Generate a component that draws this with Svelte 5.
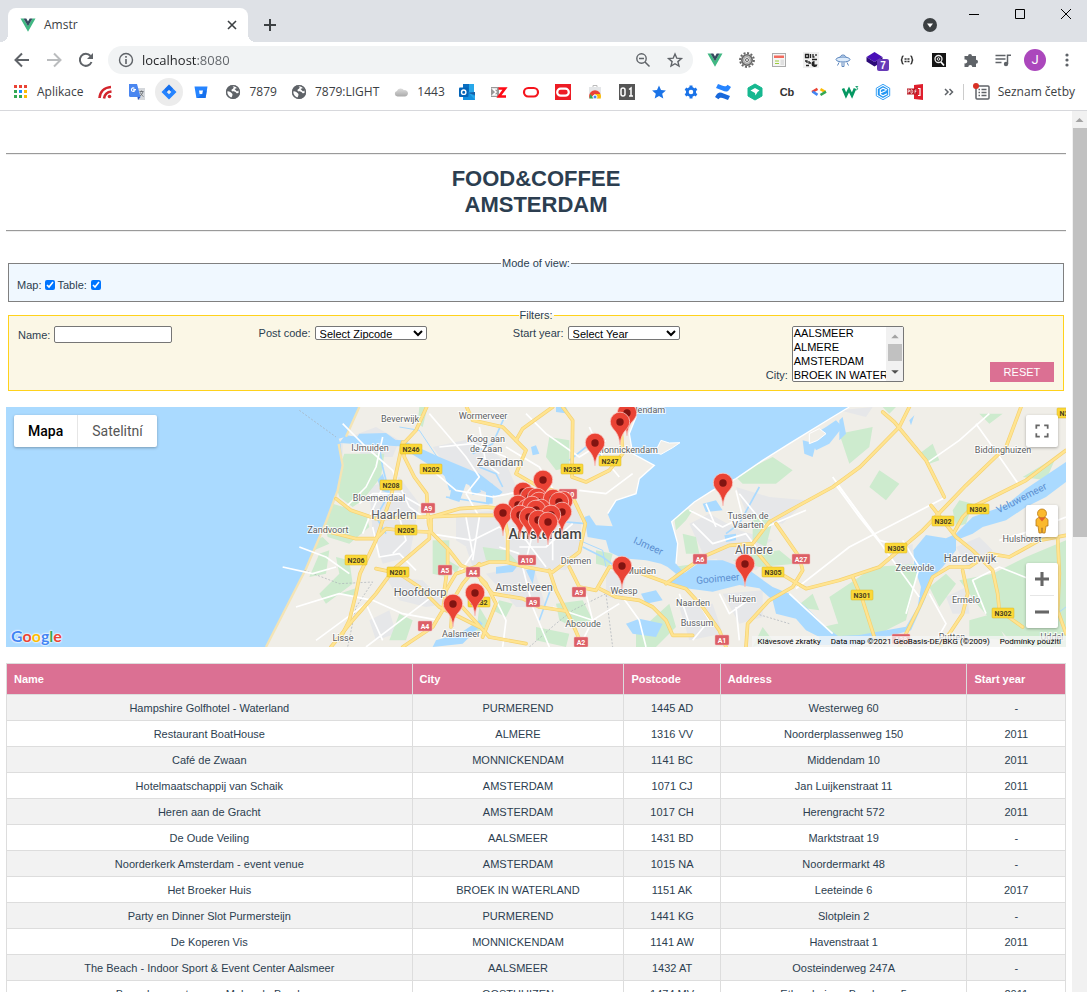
<script>
  const bookmarks = [
    { icon: 'apps', label: 'Aplikace' },
    { icon: 'feed' },
    { icon: 'translate' },
    { icon: 'jira', active: true },
    { icon: 'bucket' },
    { icon: 'globe', label: '7879' },
    { icon: 'globe', label: '7879:LIGHT' },
    { icon: 'cloud', label: '1443' },
    { icon: 'outlook' },
    { icon: 'ez' },
    { icon: 'oval' },
    { icon: 'ovalbox' },
    { icon: 'store' },
    { icon: 'zeroone' },
    { icon: 'bluestar' },
    { icon: 'bluegear' },
    { icon: 'confluence' },
    { icon: 'hexgreen' },
    { icon: 'cb' },
    { icon: 'devs' },
    { icon: 'w3' },
    { icon: 'hexblue' },
    { icon: 'pdf' }
  ];
  const extensions = ['vue', 'gear', 'page', 'qr', 'ufo', 'layers', 'braces', 'lens', 'puzzle', 'queue'];

  let showMap = $state(true);
  let showTable = $state(true);
  let name = $state('');
  let address = $state('localhost:8080');

  const cities = ['AALSMEER', 'ALMERE', 'AMSTERDAM', 'BROEK IN WATERLAND', 'MONNICKENDAM', 'OOSTHUIZEN', 'PURMEREND'];

  const rows = [
    ['Hampshire Golfhotel - Waterland', 'PURMEREND', '1445 AD', 'Westerweg 60', '-'],
    ['Restaurant BoatHouse', 'ALMERE', '1316 VV', 'Noorderplassenweg 150', '2011'],
    ['Café de Zwaan', 'MONNICKENDAM', '1141 BC', 'Middendam 10', '2011'],
    ['Hotelmaatschappij van Schaik', 'AMSTERDAM', '1071 CJ', 'Jan Luijkenstraat 11', '2011'],
    ['Heren aan de Gracht', 'AMSTERDAM', '1017 CH', 'Herengracht 572', '2011'],
    ['De Oude Veiling', 'AALSMEER', '1431 BD', 'Marktstraat 19', '-'],
    ['Noorderkerk Amsterdam - event venue', 'AMSTERDAM', '1015 NA', 'Noordermarkt 48', '-'],
    ['Het Broeker Huis', 'BROEK IN WATERLAND', '1151 AK', 'Leeteinde 6', '2017'],
    ['Party en Dinner Slot Purmersteijn', 'PURMEREND', '1441 KG', 'Slotplein 2', '-'],
    ['De Koperen Vis', 'MONNICKENDAM', '1141 AW', 'Havenstraat 1', '2011'],
    ['The Beach - Indoor Sport & Event Center Aalsmeer', 'AALSMEER', '1432 AT', 'Oosteinderweg 247A', '-'],
    ['Bezoekerscentrum en Molen de Broek', 'OOSTHUIZEN', '1474 MV', 'Ethersheimer Braakweg 5', '2011']
  ];

  // Places: text, centre x, baseline y, size class
  const places = [
    ['Beverwijk', 394, 15, 's'], ['Wormerveer', 477, 12, 's'], ['IJmuiden', 364, 44, 's'],
    ['Koog aan', 480, 35, 's'], ['de Zaan', 480, 45, 's'], ['Zaandam', 494, 59, 'm'],
    ['Bloemendaal', 373, 94, 's'], ['Haarlem', 388, 112, 'l'], ['Zandvoort', 322, 126, 's'],
    ['Hoofddorp', 414, 189, 'm'], ['Aalsmeer', 455, 230, 's'], ['Lisse', 337, 234, 's'],
    ['Diemen', 570, 157, 's'], ['Amstelveen', 518, 184, 'm'], ['Muiden', 635, 167, 's'],
    ['Weesp', 618, 187, 's'], ['Abcoude', 577, 220, 's'], ['Naarden', 687, 199, 's'],
    ['Bussum', 691, 219, 's'], ['Huizen', 736, 195, 's'], ['Almere', 748, 147, 'l'],
    ['Tussen de', 742, 112, 's'], ['Vaarten', 742, 121, 's'], ['Volendam', 639, 6, 's'],
    ['Monnickendam', 621, 46, 's'], ['Biddinghuizen', 997, 46, 's'], ['Harderwijk', 964, 155, 'm'],
    ['Hulshorst', 1016, 135, 's'], ['Zeewolde', 909, 164, 's'], ['Ermelo', 960, 196, 's'],
    ['Putten', 946, 233, 's'], ['Uddel', 1046, 233, 's']
  ];

  // Road shields: code, centre x, centre y
  const shields = [
    ['N246', 405, 42], ['N202', 425, 62], ['N208', 385, 78], ['A9', 422, 101], ['N205', 400, 123],
    ['N206', 350, 153], ['N201', 392, 165], ['A5', 439, 163], ['A4', 467, 165], ['N232', 473, 195],
    ['A9', 527, 195], ['A4', 419, 219], ['A10', 521, 153], ['A9', 573, 185], ['A2', 575, 235],
    ['N235', 566, 62], ['N247', 604, 54], ['A10', 562, 87], ['A6', 694, 152], ['A27', 795, 152],
    ['N305', 767, 165], ['N301', 856, 188], ['A1', 716, 233], ['N305', 890, 141], ['N302', 937, 114],
    ['N306', 972, 102], ['N302', 997, 206], ['N307', 1062, 6], ['A28', 895, 232]
  ];

  // Pins: position of the dot in the pin's head
  const pins = [
    [621, 6], [614, 15], [589, 36], [537, 73], [717, 76], [517, 85], [524, 90], [531, 91], [533, 95],
    [547, 92], [557, 94], [512, 98], [553, 95], [521, 102], [526, 99], [535, 102], [530, 103],
    [556, 105], [497, 106], [514, 108], [545, 108], [523, 110], [532, 113], [542, 115], [739, 157],
    [616, 159], [469, 186], [447, 197]
  ];

  // Roads in thirds of a pixel over the whole map
  const motorways = [
    'M1262 0L1230 70L1192 110L1195 150L1225 210L1262 260L1268 350L1275 375L1330 430L1365 475L1400 490L1440 530L1470 590L1430 690',
    'M1190 105L1170 200L1155 270L1130 340L1110 400L1062 500L1050 560L1030 640L1000 700',
    'M990 275L1035 310L1110 335L1260 330L1370 325L1500 325',
    'M950 370L1050 395L1110 395L1140 365L1200 372L1270 375L1270 395L1165 485L1110 560L1040 640L975 720',
    'M1325 430L1325 480L1315 550',
    'M1275 375L1275 330L1360 305L1440 300L1490 305L1505 380L1505 465L1450 465L1350 500L1320 550L1310 610L1280 660L1220 700L1190 720',
    'M1500 465L1560 480L1640 495L1720 435L1738 350L1700 270L1660 255L1600 240L1530 200L1560 130L1530 100L1490 60L1400 40L1382 0',
    'M1530 100L1550 65L1640 0',
    'M1670 0L1700 40L1698 210L1740 225L1810 190L1850 140L1845 60',
    'M1630 490L1650 550L1700 650L1730 720',
    'M1425 520L1460 560L1550 575L1600 600L1680 612',
    'M1690 480L1720 540L1770 550L1810 480L1880 490L1990 530L2040 545L2090 600L2140 670L2160 720',
    'M1780 545L1830 570L1900 580L1940 600L1980 640L2000 685L2060 685',
    'M1980 530L2090 450L2170 415L2240 410L2290 345L2370 300L2480 240L2562 180L2680 60L2710 0',
    'M2220 720L2225 650L2290 580L2360 540L2390 490L2380 450L2310 350',
    'M2240 420L2290 480L2400 545L2500 520L2620 480L2750 370L2880 235L3000 120L3030 40L3045 0',
    'M2540 510L2570 580L2605 690',
    'M2630 15L2665 45L2760 160L2815 270',
    'M2775 295L2850 390L2900 430L2960 490L2975 560L2980 610L3050 660',
    'M2845 375L2870 330L2900 300L3060 220L3180 130',
    'M2680 720L2740 600L2780 510L2830 480L2890 480L2950 440L3010 450L3100 400L3180 385',
    'M2870 490L2885 560L2870 620L2830 680L2800 720',
    'M3155 390L3160 500L3155 610L3180 680',
    'M1325 600L1360 590L1450 690L1560 710',
    'M1110 485L1180 500L1240 540L1300 600L1420 660',
    'M1420 470L1370 530L1340 580L1335 660'
  ];
  const streets = [
    'M1010 50L1080 120L1160 190L1210 300L1280 350M1130 90L1110 180L1080 240L1020 300M1270 20L1330 90L1380 150L1420 210L1380 260',
    'M880 420L960 450L1030 500M830 480L920 500L990 480M870 600L1000 560L1100 580L1190 620L1300 640M930 700L1080 590L1130 700M1080 720L1290 560',
    'M1100 360L1120 450L1180 440L1230 490M1270 380L1400 400L1480 360L1560 400L1620 480M1380 330L1400 440L1360 500M1290 200L1350 250L1460 270L1560 250',
    'M1500 120L1600 180L1650 260M1560 20L1620 80L1720 150L1800 100M1750 60L1790 150L1840 210M1720 250L1800 260L1880 200',
    'M1460 560L1500 640L1490 720M1550 480L1580 600L1630 720M1640 600L1760 640L1840 590M1740 560L1760 640L1720 720M1850 570L1900 640L1920 720',
    'M2080 590L2110 640L2060 700M2140 560L2170 620L2240 570M2190 600L2200 700M2020 560L2050 650M2200 260L2280 360L2400 310M2050 310L2150 360L2210 330L2190 250',
    'M2060 350L2120 410L2220 380L2250 420M2100 290L2130 360M2480 210L2740 570M2490 235L2560 330L2640 430M2820 270L2530 420L2370 545',
    'M2500 240L2620 400L2700 420M2690 400L2740 480L2700 620M2910 50L2960 120L3040 235M2760 170L2860 100L2950 20M2350 560L2480 680',
    'M2940 620L2900 520L2980 480L3080 520L3110 600M2770 560L2820 650L2780 720M2980 400L3080 370L3180 330M1380 260L1420 330L1400 460',
    'M1520 330L1580 370L1700 380M1540 420L1620 420L1700 350M1560 460L1580 380L1560 300M1640 460L1640 380L1600 280M1480 420L1540 440',
    'M1060 290L1100 260L1180 260L1250 300M1070 380L1090 330L1130 240M1180 330L1200 400L1160 440M1300 120L1400 110L1500 150M1420 60L1440 170L1480 200'
  ];
</script>

{#snippet icon(kind)}
  <svg class="ico" viewBox="0 0 16 16" aria-hidden="true">
    {#if kind === 'apps'}
      {#each [0, 1, 2] as r}
        {#each [0, 1, 2] as c}
          <rect x={1 + c * 5} y={1 + r * 5} width="3" height="3" fill={[['#ea4335', '#ea4335', '#ea4335'], ['#34a853', '#1a8cff', '#fbbc05'], ['#34a853', '#34a853', '#fbbc05']][r][c]} />
        {/each}
      {/each}
    {:else if kind === 'feed'}
      <g fill="none" stroke="#d3242b" stroke-width="2.6"><path d="M2.5 14C3 8 7 3.500 14 3" /><path d="M7 14.500C7.500 11 10 8 14.500 7.500" /></g>
      <circle cx="12.500" cy="12.500" r="1.800" fill="#d3242b" />
    {:else if kind === 'translate'}
      <path d="M7 4h9v12H9z" fill="#d5d8dc" /><path d="M0 0h8l3.500 13H1.500A1.500 1.500 0 0 1 0 11.500z" fill="#4a86f0" /><path d="M8.500 13h3L9 16z" fill="#2a56c6" />
      <path d="M7 5.500H4.800V6.700H5.700A1.800 1.800 0 1 1 5.400 4.300" fill="none" stroke="#fff" stroke-width="1.100" /><path d="M10.500 7.500h4M12.500 6.500v1.200M14 7.500c-.5 2-1.500 3.500-3 4.500M11.500 8.500c.5 2 1.500 3 3 4" fill="none" stroke="#6b7075" stroke-width=".9" />
    {:else if kind === 'jira'}
      <path d="M8 .5L15.500 8 8 15.500.5 8zM8 5.700L5.700 8 8 10.300 10.300 8z" fill="#2684ff" fill-rule="evenodd" /><path d="M8 .5L12 4.500 9.500 7 8 5.700 5.700 8 3.500 5.200z" fill="#0b5fdc" opacity=".55" />
    {:else if kind === 'bucket'}
      <path d="M1.500 2.500h13L12.600 14H3.400zM6 6.500L6.600 10h2.800L10 6.500z" fill="#2684ff" fill-rule="evenodd" /><path d="M10 6.500h3.900L12.600 14H4l5.400-4z" fill="#0b62df" opacity=".6" />
    {:else if kind === 'globe'}
      <circle cx="8" cy="8" r="7" fill="#5f6368" /><path d="M2 7.500c2-.5 3 .5 4.500 1.500s1 2 .5 3.500L6 14.500C3 13.500 1.500 11 2 7.500zM6 1.800c2 .2 3 1 2.500 2.200S6 5 6.500 6.500 10 7 11 8.500s2 .5 3 .2C14 5 11.500 2 8 1.500z" fill="#fff" /><path d="M9.500 5L12 4l2 2-2 1.500z" fill="#5f6368" /><circle cx="8" cy="8" r="6.400" fill="none" stroke="#5f6368" stroke-width="1.400" />
    {:else if kind === 'cloud'}
      <defs><linearGradient id="cloud" x2="0" y2="1"><stop stop-color="#ddd" /><stop offset="1" stop-color="#aaa" /></linearGradient></defs>
      <path d="M4.500 12.500a2.800 2.800 0 0 1-.6-5.500A4 4 0 0 1 11 6.200a3.200 3.200 0 1 1 .6 6.300z" fill="url(#cloud)" />
    {:else if kind === 'outlook'}
      <path d="M4 0h11v9H4z" fill="#28a8ea" /><path d="M4 0h6v8H4z" fill="#0a6ec0" /><path d="M4 8h12v8H4z" fill="#1490df" /><path d="M9 8l7 4.500V16z" fill="#28a8ea" /><path d="M9 9l7-1v3z" fill="#1a5fa3" /><rect y="3.500" width="9.500" height="9.500" rx="1" fill="#0364b8" /><circle cx="4.700" cy="8.200" r="2.200" fill="none" stroke="#fff" stroke-width="1.400" />
    {:else if kind === 'ez'}
      <rect y="3" width="8" height="10" fill="#999" /><path d="M6 5H2l3 3-3 3h4" fill="none" stroke="#fff" stroke-width="1.500" /><path d="M7.500 4.500h6.500L8 12.500h7" fill="none" stroke="#ff0a14" stroke-width="2.600" />
    {:else if kind === 'oval'}
      <rect x="1" y="4" width="14" height="8.500" rx="4.250" fill="none" stroke="#f5131c" stroke-width="2.200" />
    {:else if kind === 'ovalbox'}
      <path d="M0 0h16v16H0z" fill="#ed1c24" /><rect x="2.200" y="4.700" width="11.600" height="7" rx="3.500" fill="none" stroke="#fff" stroke-width="2.200" />
    {:else if kind === 'store'}
      <path d="M2 3h12v11.500H2z" fill="#e4e6e8" /><path d="M6 3V1.500h4V3" fill="none" stroke="#bbb" /><path d="M2.500 14.500A5.700 5.700 0 0 1 13.500 10H8z" fill="#ea4335" /><path d="M13.500 10a5.700 5.700 0 0 1 .2 4.500H9L8 10z" fill="#fbbc05" /><path d="M3.300 10L7 14.500H2.500z" fill="#34a853" /><circle cx="8" cy="13" r="2" fill="#4285f4" stroke="#fff" />
    {:else if kind === 'zeroone'}
      <path d="M0 0h16v16H0z" fill="#555" /><rect x="2" y="4" width="4" height="8" rx="2" fill="none" stroke="#fff" stroke-width="1.500" /><path d="M10 5.500L12 4v8M10 12h4" fill="none" stroke="#fff" stroke-width="1.500" />
    {:else if kind === 'bluestar'}
      <path d="M8 1.500l2 4.500 4.900.5-3.700 3.200 1.100 4.800L8 12l-4.300 2.500 1.100-4.800L1.100 6.500 6 6z" fill="#1a73e8" />
    {:else if kind === 'bluegear'}
      <circle cx="8" cy="8" r="3.700" fill="none" stroke="#1a73e8" stroke-width="2.800" /><path d="M8 1.500v2.500M8 12v2.500M2.400 4.800l2 1.200M11.600 10l2 1.200M2.400 11.200l2-1.200M11.600 6l2-1.200" stroke="#1a73e8" stroke-width="3" />
    {:else if kind === 'confluence'}
      <path d="M1 11.500c2.500-4.500 5-3 7.500-2L15 12l-2 4c-4.500-1.500-7.500-4-9.500-.8L0 13z" fill="#1868db" /><path d="M15 4.500c-2.500 4.500-5 3-7.500 2L1 4l2-4c4.500 1.500 7.500 4 9.500.8L16 3z" fill="#2684ff" />
    {:else if kind === 'hexgreen'}
      <path d="M8 0l7 4v8l-7 4-7-4V4z" fill="#17b890" stroke="#17b890" stroke-linejoin="round" /><path d="M3.500 6.500L8 4l4.500 2.500L10.500 8l-2 3.500L8 9z" fill="#fff" />
    {:else if kind === 'cb'}
      <text x="8" y="12" text-anchor="middle" class="glyph">Cb</text>
    {:else if kind === 'devs'}
      <g fill="none" stroke-width="2.600"><path d="M1 8l5.500-3.200" stroke="#ea4335" /><path d="M1.500 7.500L6.500 10.800" stroke="#4285f4" /><path d="M9.500 5.200l5 2.900" stroke="#fbbc05" /><path d="M15 7.700l-5.500 3.300" stroke="#34a853" /></g>
    {:else if kind === 'w3'}
      <path d="M0 4.500l3 7 3-6 3 6 3-7" fill="none" stroke="#059862" stroke-width="2.700" /><path d="M12.500 2.500h2.300l-1.200 1.400c1.800.2 1.400 2.300-1.100 1.900" fill="none" stroke="#059862" stroke-width=".9" />
    {:else if kind === 'hexblue'}
      <path d="M8 .3l6.700 3.900v7.600L8 15.700l-6.700-3.900V4.200z" fill="none" stroke="#2296f3" stroke-width=".9" /><path d="M8 2l5.200 3v6L8 14l-5.200-3V5z" fill="#2296f3" /><path d="M12 6L8 4.200 5.300 5.800v4.400L8 11.800l4-2M5.500 9l5.500-2.500" fill="none" stroke="#fff" stroke-width="1.200" />
    {:else if kind === 'pdf'}
      <path d="M7 1l9-1v16l-9-1z" fill="#df1f2d" /><path d="M0 4.500h10v6H0z" fill="#b9141f" /><path d="M1 5.500v4M1 6h1.500v1.600H1M4 5.800v3.500h1c1 0 1-3.500 0-3.500zM8 9.500V6h1.500M8 7.500h1.300" fill="none" stroke="#fff" stroke-width=".7" /><path d="M11 4.500h2v7h-2" fill="none" stroke="#fff" stroke-width="1.200" />
    {:else if kind === 'vue'}
      <path d="M.5 1.500h3L8 9l4.500-7.500h3L8 14.800z" fill="#41b883" /><path d="M3.500 1.500h2.800L8 4.500l1.700-3h2.800L8 9.300z" fill="#34495e" />
    {:else if kind === 'gear'}
      <circle cx="8" cy="8" r="6.900" fill="none" stroke="#666" stroke-width="2" stroke-dasharray="2 1.600" /><circle cx="8" cy="8" r="5.200" fill="#ccc" stroke="#666" stroke-width="1.600" /><circle cx="8" cy="8" r="3.400" fill="#e8e8e8" stroke="#999" /><circle cx="8" cy="8" r="1.500" fill="#f8f8f8" stroke="#444" stroke-width=".8" />
    {:else if kind === 'page'}
      <rect x="1.500" y="1.500" width="13" height="13" fill="#f5f5f5" stroke="#aaa" /><path d="M3 3.500h10v2.500H3z" fill="#f26b5e" /><path d="M4 9h4M4 11.500h4" stroke="#9ccc3c" stroke-width="1.200" /><path d="M9.500 7.500H13V13H9.500z" fill="#e0e0e0" />
    {:else if kind === 'qr'}
      <path d="M0 0h16v16H0z" fill="#f0f0f0" /><g fill="none" stroke="#222" stroke-width="1.300"><path d="M2.500 2.500h3v3h-3zM10 2v3h1.500M13 2v2M7.500 2v4M2 9h2v2M6 9v2h2M3 13.500h3M9 7.500h5" /></g><path d="M11.500 9a3 3 0 1 0 3 3.500h-3z" fill="#222" />
    {:else if kind === 'ufo'}
      <g fill="#dcebfb" stroke="#5c86bd" stroke-width="1"><path d="M5 6c0-4 6-4 6 0" /><ellipse cx="8" cy="7.500" rx="7" ry="2.500" /><path d="M4 10.500l-1.500 3M12 10.500l1.500 3M7 10.500v4h2v-4" fill="none" /></g>
    {:else if kind === 'layers'}
      <path d="M7.500 0L15.500 5 7.500 10-.5 5z" fill="#4a10b8" /><path d="M-.5 5l8 5 8-5v4.500l-8 5-8-5z" fill="#2c0a78" /><rect x="10" y="7" width="12" height="12" rx="2" fill="#673ab7" /><text x="16" y="17" text-anchor="middle" class="badge">7</text>
    {:else if kind === 'braces'}
      <g fill="none" stroke="#333" stroke-width="1.500"><path d="M4.500 4C2 4 4 7.500 2 8c2 .5 0 4 2.500 4M11.500 4c2.500 0 .5 3.500 2.500 4-2 .5 0 4-2.500 4" /><path d="M5.500 7h5M5.500 9.500h5" stroke-dasharray="2.100 .8" /></g>
    {:else if kind === 'lens'}
      <path d="M1 1h14v14H1z" fill="#151515" /><circle cx="7.500" cy="7" r="3.500" fill="none" stroke="#eee" stroke-width="1.300" /><circle cx="7.500" cy="7" r="1.300" fill="none" stroke="#eee" /><path d="M10 10l3 3.500" stroke="#fff" stroke-width="1.700" />
    {:else if kind === 'puzzle'}
      <path d="M1.500 4H5a2 2 0 1 1 4 0h4v3.700a2 2 0 1 1 0 4v3.300H9.300a2 2 0 1 0-4 0H1.500v-3.700a2 2 0 1 0 0-3.700z" fill="#5f6368" />
    {:else if kind === 'queue'}
      <path d="M.5 3.500h10M.5 7h10M.5 10.500h6" stroke="#5f6368" stroke-width="1.500" /><path d="M12.500 12V3.300H16" fill="none" stroke="#5f6368" stroke-width="1.500" /><circle cx="11" cy="12" r="2.200" fill="#5f6368" />
    {/if}
  </svg>
{/snippet}

<div class="window">
  <header class="chrome">
    <div class="tabs">
      <div class="tab">
        {@render icon('vue')}
        <span class="tab-title">Amstr</span>
        <button class="plain small" aria-label="Close tab"><svg viewBox="0 0 16 16"><path d="M4 4l8 8M12 4l-8 8" stroke="#3c4043" stroke-width="1.600" /></svg></button>
      </div>
      <button class="plain small newtab" aria-label="New tab"><svg viewBox="0 0 16 16"><path d="M8 2v12M2 8h12" stroke="#3c4043" stroke-width="2" /></svg></button>
      <button class="plain small tabsearch" aria-label="Search tabs"><svg viewBox="0 0 16 16"><circle cx="8" cy="8" r="7" fill="#3c4043" /><path d="M5 6.500h6L8 10.500z" fill="#fff" /></svg></button>
      <div class="winbuttons">
        <button class="plain" aria-label="Minimize"><svg viewBox="0 0 12 12"><path d="M1 6.500h10" stroke="#000" /></svg></button>
        <button class="plain" aria-label="Maximize"><svg viewBox="0 0 12 12"><path d="M1.500 1.500h9v9h-9z" fill="none" stroke="#000" /></svg></button>
        <button class="plain" aria-label="Close"><svg viewBox="0 0 12 12"><path d="M1 1l10 10M11 1L1 11" stroke="#000" /></svg></button>
      </div>
    </div>

    <div class="toolbar">
      <button class="plain tool" aria-label="Back"><svg viewBox="0 0 16 16"><path d="M15 8H2M8 1.500L1.500 8 8 14.500" fill="none" stroke="#5f6368" stroke-width="2" /></svg></button>
      <button class="plain tool" aria-label="Forward"><svg viewBox="0 0 16 16"><path d="M1 8h13M8 1.500L14.500 8 8 14.500" fill="none" stroke="#babcbe" stroke-width="2" /></svg></button>
      <button class="plain tool" aria-label="Reload"><svg viewBox="0 0 16 16"><path d="M13.500 10A6 6 0 1 1 12.500 4" fill="none" stroke="#5f6368" stroke-width="2" /><path d="M15 1v6H9z" fill="#5f6368" /></svg></button>
      <div class="omnibox">
        <svg class="ico" viewBox="0 0 16 16" aria-hidden="true"><circle cx="8" cy="8" r="6.500" fill="none" stroke="#5f6368" stroke-width="1.400" /><path d="M8 7v5M8 4v1.700" stroke="#5f6368" stroke-width="1.600" /></svg>
        <input type="text" aria-label="Address" bind:value={address} />
        <button class="plain tool" aria-label="Zoom"><svg viewBox="0 0 16 16"><circle cx="6.500" cy="6.500" r="4.700" fill="none" stroke="#5f6368" stroke-width="1.400" /><path d="M10 10l4.500 4.500M4 6.500h5" stroke="#5f6368" stroke-width="1.500" /></svg></button>
        <button class="plain tool" aria-label="Bookmark"><svg viewBox="0 0 16 16"><path d="M8 2l1.800 4.200 4.600.4-3.500 3 1.100 4.500L8 11.700l-4 2.400 1.100-4.500-3.500-3 4.600-.4z" fill="none" stroke="#5f6368" stroke-width="1.400" /></svg></button>
      </div>
      {#each extensions as e}
        <button class="plain tool" aria-label={e}>{@render icon(e)}</button>
      {/each}
      <button class="avatar" aria-label="Profile">J</button>
      <button class="plain tool" aria-label="Menu"><svg viewBox="0 0 16 16"><g fill="#5f6368"><circle cx="8" cy="3" r="1.600" /><circle cx="8" cy="8" r="1.600" /><circle cx="8" cy="13" r="1.600" /></g></svg></button>
    </div>

    <nav class="bookmarks" aria-label="Bookmarks">
      {#each bookmarks as b}
        <a href="#bookmark" class:active={b.active} class:labelled={b.label} aria-label={b.label ?? b.icon}>
          {@render icon(b.icon)}
          {#if b.label}<span>{b.label}</span>{/if}
        </a>
      {/each}
      <button class="plain more" aria-label="More bookmarks"><svg viewBox="0 0 16 16"><path d="M4 5l3 3-3 3M8.500 5l3 3-3 3" fill="none" stroke="#5f6368" stroke-width="1.500" /></svg></button>
      <a href="#reading" class="reading">
        <svg class="ico" viewBox="0 0 16 16" aria-hidden="true"><rect x="2" y="2" width="13" height="13" rx="1" fill="none" stroke="#5f6368" stroke-width="1.500" /><path d="M4.500 5.500h1.500M4.500 8.500h1.500M4.500 11.500h1.500M7.500 5.500h5M7.500 8.500h5M7.500 11.500h5" stroke="#5f6368" stroke-width="1.500" /><circle cx="2" cy="2" r="3" fill="#d93025" /></svg>
        <span>Seznam četby</span>
      </a>
    </nav>
  </header>

  <div class="viewport">
    <main>
      <hr />
      <h1>FOOD&amp;COFFEE<br />AMSTERDAM</h1>
      <hr />

      <fieldset class="mode">
        <legend>Mode of view:</legend>
        <label for="map-on">Map:</label><input id="map-on" type="checkbox" bind:checked={showMap} />
        <label for="table-on">Table:</label><input id="table-on" type="checkbox" bind:checked={showTable} />
      </fieldset>

      <fieldset class="filters">
        <legend>Filters:</legend>
        <div class="filter-row">
          <div class="field"><label for="name">Name:</label><input id="name" type="text" bind:value={name} /></div>
          <div class="field"><label for="zip">Post code:</label><select id="zip"><option>Select Zipcode</option></select></div>
          <div class="field"><label for="year">Start year:</label><select id="year"><option>Select Year</option></select></div>
          <div class="field end">
            <label for="city">City:</label>
            <div class="listbox">
              <select id="city" multiple size="4">
                {#each cities as c}<option>{c}</option>{/each}
              </select>
              <div class="bar" aria-hidden="true">
                <svg viewBox="0 0 15 14"><path d="M3.500 9.500h8l-4-4z" fill="#a3a3a3" /></svg>
                <i></i>
                <svg viewBox="0 0 15 14"><path d="M3.500 5h8l-4 4z" fill="#505050" /></svg>
              </div>
            </div>
          </div>
          <button class="reset" type="button">RESET</button>
        </div>
      </fieldset>

      {#if showMap}
        <section class="map" aria-label="Map">
          <svg class="canvas" viewBox="0 0 1060 240" preserveAspectRatio="xMidYMid slice">
            <rect width="1060" height="240" fill="#f0eee8" />
            <g transform="scale(.33333)">
              <g fill="#e6e7e9">
                <path d="M1030 90L1110 60L1180 100L1160 150L1070 150ZM1090 240L1180 210L1240 290L1210 450L1130 470L1100 380ZM1280 120L1420 90L1500 170L1540 260L1420 260L1330 190Z" />
                <path d="M1350 320L1480 310L1500 420L1430 450L1350 400ZM1500 310L1720 290L1730 430L1680 490L1560 480L1500 440ZM1380 420L1460 400L1470 460L1400 480Z" />
                <path d="M1440 500L1580 470L1620 600L1530 600ZM1140 510L1250 520L1320 590L1260 600L1180 580ZM1090 640L1150 610L1170 680L1110 700Z" />
                <path d="M2050 350L2110 320L2200 370L2300 400L2230 440L2100 460ZM2190 240L2290 270L2400 280L2330 350L2230 340ZM2120 430L2290 450L2250 490L2140 470Z" />
                <path d="M2020 600L2120 590L2150 680L2050 700ZM2150 560L2270 550L2270 630L2200 650ZM1800 490L1860 500L1850 580L1800 570ZM2850 420L2920 390L2960 430L2890 490Z" />
                <path d="M2650 440L2720 410L2720 470L2670 480ZM2820 570L2880 540L2890 620L2840 620ZM2500 10L2600 0L2580 30ZM900 110L1010 105L1010 150L940 170Z" />
              </g>
              <g fill="#cdebce">
                <path d="M1015 140L1135 140L1125 210L1070 280L1040 300L1000 270L985 220ZM980 290L1080 320L1090 360L1030 410L965 390L955 350Z" />
                <path d="M940 440L970 430L960 500L910 510ZM990 450L1030 460L1040 530L960 590L940 560L1000 500ZM1000 560L1060 540L1040 570ZM1280 400L1330 400L1330 440L1320 510L1280 500Z" />
                <path d="M1630 90L1690 100L1690 180L1650 190L1620 150ZM1240 0L1265 0L1250 60L1235 50ZM1310 450L1360 480L1350 500ZM1650 590L1730 580L1760 640L1700 660L1660 640Z" />
                <path d="M1430 420L1500 430L1540 470L1440 460ZM1480 580L1520 590L1500 630L1460 610ZM1590 660L1690 680L1680 720L1590 700ZM1770 430L1820 440L1810 480L1770 470Z" />
                <path d="M2000 300L2060 310L2040 340L2010 370ZM2030 380L2070 390L2080 440L2040 440ZM2180 200L2260 170L2300 150L2360 190L2310 230L2210 230ZM2500 80L2600 60L2590 120L2530 170Z" />
                <path d="M2180 460L2250 440L2320 430L2370 470L2260 480ZM2240 320L2300 340L2280 420L2240 400ZM2370 600L2420 560L2440 610ZM2270 660L2300 700L2240 720ZM1890 680L1990 590L2010 660L1950 720L1890 720Z" />
                <path d="M2470 570L2560 510L2600 480L2740 470L2700 640L2620 680L2500 660ZM2450 660L2540 640L2640 670L2640 700L2480 710ZM2740 140L2780 110L2800 160L2770 170ZM2620 190L2680 230L2640 280L2590 240Z" />
                <path d="M2840 310L2860 280L2900 290L2880 350L2850 360ZM2860 520L2960 500L3060 450L3180 400L3180 720L3030 720L2920 600ZM2770 540L2820 500L2850 530L2800 600ZM2890 640L2960 620L3000 700L2890 690ZM2920 20L2990 20L2950 50ZM3050 210L3150 150L3120 220Z" />
                <path d="M1180 620L1220 640L1200 700L1150 700ZM1420 600L1450 650L1410 680ZM870 420L950 390L970 410L900 440ZM2000 480L2070 470L2030 500ZM2630 0L2670 0L2650 20Z" />
              </g>
              <g fill="#aadaff">
                <path d="M0 0H1060L1020 89L998 95L1004 111L1010 175L995 250L960 345L900 485L780 720H0Z" />
                <path d="M1018 84L1090 95L1190 100L1300 150L1420 200L1490 255L1475 270L1380 230L1360 285L1330 275L1340 225L1280 180L1180 118L1060 112L1000 108Z" />
                <path d="M1380 200L1400 265L1425 255L1410 205ZM1440 230L1440 290L1460 290L1460 230ZM1310 190L1330 250L1345 250L1340 200Z" />
                <path d="M1878 0L1890 30L1870 80L1880 140L1945 175L1900 215L1890 260L1830 280L1805 320L1820 358L1770 355L1750 325L1735 330L1745 390L1800 400L1810 435L1850 454L1920 460L1965 470L1985 480L2010 500L1982 529L2040 544L2120 554L2200 534L2260 544L2300 580L2310 620L2370 635L2400 670L2440 690L2500 690L2460 660L2400 600L2350 560L2300 540L2230 490L2150 460L2090 460L2035 499L2010 470L2015 410L1997 344L2065 285L2120 250L2190 215L2270 160L2350 110L2480 30L2530 0Z" />
                <path d="M2440 690L2560 684L2700 659L2735 600L2745 540L2725 480L2722 430L2760 384L2820 394L2850 380L2900 330L3000 295L3060 245L3180 165V225L3120 270L3060 300L3000 340L2930 360L2900 380L2850 400L2850 430L2810 480L2770 520L2760 570L2715 670L2640 690L2560 714L2440 714Z" />
                <path d="M2410 90L2460 60L2490 40L2510 60L2470 110L2430 130ZM2390 100L2430 110L2420 150L2395 140ZM2090 290L2130 280L2150 310L2100 315ZM2155 385L2190 380L2190 400L2160 405ZM1905 560L1950 550L1970 580L1920 590Z" />
                <path d="M1860 650L1900 635L1970 650L1950 690L1880 680ZM1290 700L1360 680L1420 640L1430 650L1370 710L1280 720ZM1115 220L1125 250L1150 260L1130 200ZM1560 490L1590 480L1580 530ZM2510 30L2520 80L2500 100L2500 40ZM2710 40L2725 25L2715 55Z" />
                <path d="M1575 120L1590 115L1600 140L1580 145ZM1470 480L1540 470L1520 495L1470 500ZM1650 0L1680 0L1690 20L1650 15ZM1060 80L1140 78L1170 100L1050 95Z" />
              </g>
              <g fill="#f0eee8" stroke="#fff" stroke-width="3">
                <path d="M1955 120L1965 100L1990 108L2022 107L2000 122L1965 142L1945 135Z" />
                <path d="M2410 80L2440 65L2460 80L2435 100L2410 110Z" />
              </g>
              <path d="M1060 0L1020 89M998 111L1010 175L995 250L960 345L900 485L780 720" fill="none" stroke="#f4e4b5" stroke-width="7" />
              <path d="M1878 0L1890 30L1870 80L1880 140L1945 175L1900 215L1890 260L1830 280L1805 320M2010 470L2015 410L1997 344L2065 285L2120 250L2190 215L2270 160L2350 110L2480 30L2530 0" fill="none" stroke="#fff" stroke-width="4" />
              <g fill="none" stroke="#aadaff" stroke-width="5">
                <path d="M1730 420L1790 450L1830 480M1550 250L1620 340L1740 350M1420 180L1470 200L1490 240M1500 20L1460 110L1400 140M1690 160L1740 120L1810 160M1120 120L1130 180L1150 260L1110 330L1140 380M1640 530L1600 640M1320 270L1450 290M2160 380L2200 350L2260 240" />
                <path d="M1180 60L1240 70L1300 160M1720 400L1790 430L1800 480M3180 600L3100 660" stroke-width="3" />
              </g>
              <g fill="none" stroke="#a8adb5" stroke-width="2" stroke-dasharray="6 5">
                <path d="M895 490L1000 530L1100 525L1050 600L1025 720M880 10L990 90M1570 720L1650 650L1700 610L1800 560L1820 720M2250 620L2350 650" />
              </g>
              <g fill="none" stroke="#fff" stroke-width="5" stroke-linejoin="round">
                {#each streets as d}<path {d} />{/each}
              </g>
              <g fill="none" stroke="#f5d272" stroke-width="11" stroke-linejoin="round" stroke-linecap="round">
                {#each motorways as d}<path {d} />{/each}
              </g>
              <g fill="none" stroke="#ffe491" stroke-width="7" stroke-linejoin="round" stroke-linecap="round">
                {#each motorways as d}<path {d} />{/each}
              </g>
            </g>
            <g class="places">
              {#each places as [t, x, y, size]}<text {x} {y} class={size}>{t}</text>{/each}
              <text x="539" y="132" class="capital">Amsterdam</text>
              <text class="water" transform="translate(641 142) rotate(24)">IJmeer</text>
              <text class="water" transform="translate(712 175) rotate(-5)">Gooimeer</text>
              <text class="water" transform="translate(1017 94) rotate(-27)">Veluwemeer</text>
            </g>
            {#each shields as [code, x, y]}
              {@const red = code.startsWith('A')}
              {@const w = code.length > 3 ? 22 : code.length > 2 ? 18 : 14}
              <rect x={x - w / 2} y={y - 5} width={w} height="10" rx="1" fill={red ? '#dc5f66' : '#fbd837'} stroke={red ? '#f3b9bb' : '#d9b429'} stroke-width=".5" />
              <text {x} y={y + 3} class="shield" fill={red ? '#fff' : '#4a4222'}>{code}</text>
            {/each}
            {#each pins as [x, y]}
              <g transform="translate({x} {y})">
                <path d="M0 23C-1 13-4 10-7.500 6A9.700 9.700 0 1 1 7.500 6C4 10 1 13 0 23Z" fill="#ea4335" stroke="#f9c6c1" stroke-width=".8" />
                <circle r="3.700" fill="#811411" />
              </g>
            {/each}
          </svg>

          <div class="maptype">
            <button type="button" class="on">Mapa</button>
            <button type="button">Satelitní</button>
          </div>
          <button type="button" class="ctl full" aria-label="Fullscreen"><svg viewBox="0 0 16 16"><path d="M1.500 5.500v-4h4M10.500 1.500h4v4M14.500 10.500v4h-4M5.500 14.500h-4v-4" fill="none" stroke="#666" stroke-width="2" /></svg></button>
          <div class="side">
            <button type="button" class="ctl" aria-label="Street View"><svg class="peg" viewBox="0 0 16 26"><path d="M4.500 9.500h7l2.500 2v6.500h-2l-1 7H8.500v-5h-1v5H5l-1-7H2v-6.500z" fill="#fbb92e" stroke="#b87a16" stroke-width=".8" /><circle cx="8" cy="5.500" r="4.500" fill="#fbb92e" stroke="#b87a16" stroke-width=".8" /><path d="M4.500 9.500h7L8 13.500z" fill="#e2622b" /></svg></button>
            <div class="zoom">
              <button type="button" aria-label="Zoom in"><svg viewBox="0 0 16 16"><path d="M0 8h16M8 0v16" stroke="#666" stroke-width="3.500" /></svg></button>
              <button type="button" aria-label="Zoom out"><svg viewBox="0 0 16 16"><path d="M0 8h16" stroke="#666" stroke-width="3.500" /></svg></button>
            </div>
          </div>
          <div class="google" aria-label="Google"><b class="bl">G</b><b class="rd">o</b><b class="ye">o</b><b class="bl">g</b><b class="gr">l</b><b class="rd">e</b></div>
          <div class="credits">
            <a href="#keys">Klávesové zkratky</a><span>Data map ©2021 GeoBasis-DE/BKG (©2009)</span><a href="#terms">Podmínky použití</a>
          </div>
        </section>
      {/if}

      {#if showTable}
        <table>
          <colgroup><col class="c1" /><col class="c2" /><col class="c3" /><col class="c4" /><col class="c5" /></colgroup>
          <thead>
            <tr><th>Name</th><th>City</th><th>Postcode</th><th>Address</th><th>Start year</th></tr>
          </thead>
          <tbody>
            {#each rows as r}
              <tr>{#each r as cell}<td>{cell}</td>{/each}</tr>
            {/each}
          </tbody>
        </table>
      {/if}
    </main>
    <div class="scrollbar" aria-hidden="true">
      <svg viewBox="0 0 15 17"><path d="M3.500 11h8l-4-4z" fill="#a3a3a3" /></svg>
      <i></i>
    </div>
  </div>
</div>

<style>
  :global(body) { margin: 0; background: #fff; overflow: hidden; }
  * { box-sizing: border-box; }
  .window { height: 100vh; display: flex; flex-direction: column; overflow: hidden; }
  .ico { width: 16px; height: 16px; display: block; flex: none; overflow: visible; }
  .plain { border: 0; background: none; padding: 0; display: flex; align-items: center; justify-content: center; }
  .glyph { font: bold 11px "Liberation Sans", sans-serif; fill: #333; }
  .badge { font: bold 10px "Liberation Sans", sans-serif; fill: #fff; }

  .chrome { flex: none; border-bottom: 1px solid #d7d8dc; font: 12px/16px "Open Sans", sans-serif; color: #3c4043; }
  .tabs { display: flex; align-items: flex-end; height: 42px; padding-left: 8px; background: #dee1e6; overflow: hidden; }
  .tab { position: relative; display: flex; align-items: center; gap: 8px; width: 240px; height: 34px; padding: 0 8px 0 12px; background: #fff; border-radius: 8px 8px 0 0; }
  .tab::before, .tab::after { content: ""; position: absolute; bottom: 0; width: 8px; height: 8px; }
  .tab::before { left: -8px; background: radial-gradient(circle at 0 0, #dee1e6 8px, #fff 8px); }
  .tab::after { right: -8px; background: radial-gradient(circle at 100% 0, #dee1e6 8px, #fff 8px); }
  .tab-title { flex: 1; }
  .small svg { width: 16px; height: 16px; display: block; }
  .small { height: 34px; }
  .newtab { margin-left: 14px; }
  .tabsearch { margin-left: auto; }
  .winbuttons { display: flex; align-self: flex-start; margin: 0 -2px 0 13px; }
  .winbuttons button { width: 46px; height: 28px; }
  .winbuttons svg { width: 12px; height: 12px; }

  .toolbar { display: flex; align-items: center; height: 36px; padding: 0 4px 0 6px; }
  .tool { width: 32px; height: 28px; flex: none; }
  .tool svg { width: 16px; height: 16px; display: block; overflow: visible; }
  .omnibox { flex: 1; display: flex; align-items: center; height: 28px; margin: 0 6px; padding: 0 2px 0 10px; background: #f1f3f4; border-radius: 14px; }
  .omnibox input { flex: 1; min-width: 0; border: 0; outline: 0; padding: 0; margin-left: 8px; font: 13px/20px "Open Sans", sans-serif; color: transparent; background: linear-gradient(90deg, #202124 55px, #5f6368 55px); background-clip: text; -webkit-background-clip: text; }
  .avatar { width: 22px; height: 22px; margin: 0 5px; border: 0; border-radius: 50%; padding: 0; background: #ab47bc; color: #fff; font: 13px/22px Roboto, sans-serif; flex: none; }

  .bookmarks { display: flex; align-items: center; height: 28px; margin-bottom: 4px; padding: 0 4px 0 5px; }
  .bookmarks a { display: flex; align-items: center; gap: 8px; height: 28px; padding: 0 8px; color: #3c4043; text-decoration: none; white-space: nowrap; flex: none; }
  .bookmarks .labelled { padding-right: 6px; }
  .bookmarks .active { position: relative; z-index: 0; }
  .bookmarks .active::before { content: ""; position: absolute; inset: 0 2px; z-index: -1; background: #ececec; border-radius: 50%; }
  .more { width: 16px; margin-left: auto; }
  .more svg { width: 16px; height: 16px; }
  .bookmarks .reading { height: 16px; margin-left: 6px; padding: 0 8px 0 10px; border-left: 1px solid #ccc; }

  .viewport { flex: 1; min-height: 0; display: flex; overflow: hidden; }
  main { flex: 1; min-width: 0; padding: 42px 6px 0; overflow: hidden; font: 11px/14px "Liberation Sans", Arial, sans-serif; color: #2c3e50; text-align: center; }
  hr { height: 2px; margin: 0; border: 0; border-top: 1px solid #9a9a9a; border-bottom: 1px solid #eee; }
  h1 { margin: 11px 0 12px; font-size: 22px; line-height: 26px; font-weight: bold; }
  fieldset { margin: 0 2px; min-width: 0; padding: 0 9px; border: 1px solid gray; background: #f0f8ff; text-align: left; }
  legend { margin: 0 auto; padding: 0 1px; }
  .mode { margin-top: 24px; height: 46px; display: flex; align-items: center; padding: 0 8px 2px; }
  .mode label { margin-right: 4px; }
  .mode input { width: 10px; height: 10px; margin: 0 2px 0 0; accent-color: #0075ff; }
  .filters { margin-top: 6px; height: 83px; border-color: #ffd21c; background: #fbf7e6; }
  .filter-row { display: flex; justify-content: space-between; align-items: flex-start; padding-top: 4px; }
  .field { display: flex; align-items: center; gap: 4px; }
  .field.end { align-items: flex-end; }
  .field input { width: 118px; height: 17px; border: 1px solid #767676; border-radius: 2px; background: #fff; padding: 0 2px; font: inherit; }
  .field select { width: 112px; height: 14px; border: 1px solid #767676; border-radius: 2px; background: #fff; padding: 0; font: 11px/12px "Liberation Sans", Arial, sans-serif; color: #000; }
  .listbox { display: flex; width: 112px; height: 56px; border: 1px solid #767676; border-radius: 2px; background: #fff; }
  .field .listbox select { flex: 1; min-width: 0; width: auto; height: 54px; border: 0; overflow: hidden; scrollbar-width: none; }
  .listbox option { height: 14px; min-height: 0; padding: 0 1px; line-height: 14px; }
  .bar { display: flex; flex-direction: column; width: 17px; padding: 2px 1px 2px 2px; background: #f1f1f1; }
  .bar svg { width: 14px; height: 14px; }
  .bar i { display: block; height: 17px; margin: 1px 0 auto; background: #c1c1c1; }
  .reset { align-self: flex-end; width: 64px; height: 20px; border: 0; padding: 0; background: #db7093; color: #fff; font: 11px/20px "Liberation Sans", Arial, sans-serif; }

  .map { position: relative; height: 240px; margin-top: 16px; overflow: hidden; font-family: Roboto, Arial, sans-serif; }
  .canvas { display: block; width: 100%; height: 240px; }
  .canvas text { text-anchor: middle; }
  .places text { fill: #5d5f63; stroke: #fff; stroke-width: 2px; stroke-opacity: .8; paint-order: stroke; font-size: 9px; }
  .places .m { font-size: 11px; }
  .places .l { font-size: 12px; }
  .places .capital { font-size: 14px; font-weight: 500; fill: #444; }
  .places .water { fill: #5c8fd0; stroke: none; font-size: 10px; }
  .shield { font-size: 7px; font-weight: 700; }
  .maptype { position: absolute; left: 8px; top: 8px; display: flex; height: 32px; background: #fff; border-radius: 2px; box-shadow: 0 1px 3px rgba(0, 0, 0, .3); }
  .maptype button { border: 0; border-left: 1px solid #e6e6e6; padding: 0 14px; background: none; font: 14px/32px Roboto, Arial, sans-serif; color: #565656; }
  .maptype .on { border-left: 0; color: #000; font-weight: 500; }
  .ctl, .zoom { width: 32px; border: 0; padding: 0; background: #fff; border-radius: 2px; box-shadow: 0 1px 3px rgba(0, 0, 0, .3); }
  .ctl { display: flex; align-items: center; justify-content: center; height: 32px; }
  .ctl svg, .zoom svg { width: 14px; height: 14px; display: block; }
  .ctl .peg { width: 16px; height: 26px; }
  .full { position: absolute; right: 8px; top: 8px; }
  .side { position: absolute; right: 8px; bottom: 19px; display: grid; gap: 26px; }
  .zoom button { display: flex; align-items: center; justify-content: center; width: 24px; height: 32px; margin: 0 4px; border: 0; padding: 0; background: none; }
  .zoom button + button { height: 33px; border-top: 1px solid #e6e6e6; }
  .google { position: absolute; left: 5px; bottom: 1px; font: 16px/20px Lato, sans-serif; text-shadow: 0 0 2px #fff, 0 0 2px #fff, 0 0 2px #fff; }
  .google b { font-weight: 700; }
  .bl { color: #4285f4; } .rd { color: #ea4335; } .ye { color: #fbbc05; } .gr { color: #34a853; }
  .credits { position: absolute; right: 0; bottom: 0; display: flex; font-size: 8px; line-height: 11px; color: #000; white-space: nowrap; }
  .credits > * { padding: 0 5px; background: rgba(245, 245, 245, .75); color: #000; text-decoration: none; }

  table { width: 100%; margin-top: 16px; border-collapse: collapse; table-layout: fixed; }
  th, td { height: 26px; border: 1px solid #ddd; padding: 0 7px; }
  th { height: 31px; text-align: left; color: #fff; background: #db7093; }
  tbody tr:nth-child(odd) { background: #f2f2f2; }
  .c1 { width: 38.3%; } .c2 { width: 20%; } .c3 { width: 9.1%; } .c4 { width: 23.3%; } .c5 { width: 9.3%; }

  .scrollbar { width: 15px; flex: none; background: #f1f1f1; }
  .scrollbar svg { display: block; width: 15px; height: 17px; }
  .scrollbar i { display: block; height: 409px; margin: 0 0 0 1px; background: #c1c1c1; }
</style>
